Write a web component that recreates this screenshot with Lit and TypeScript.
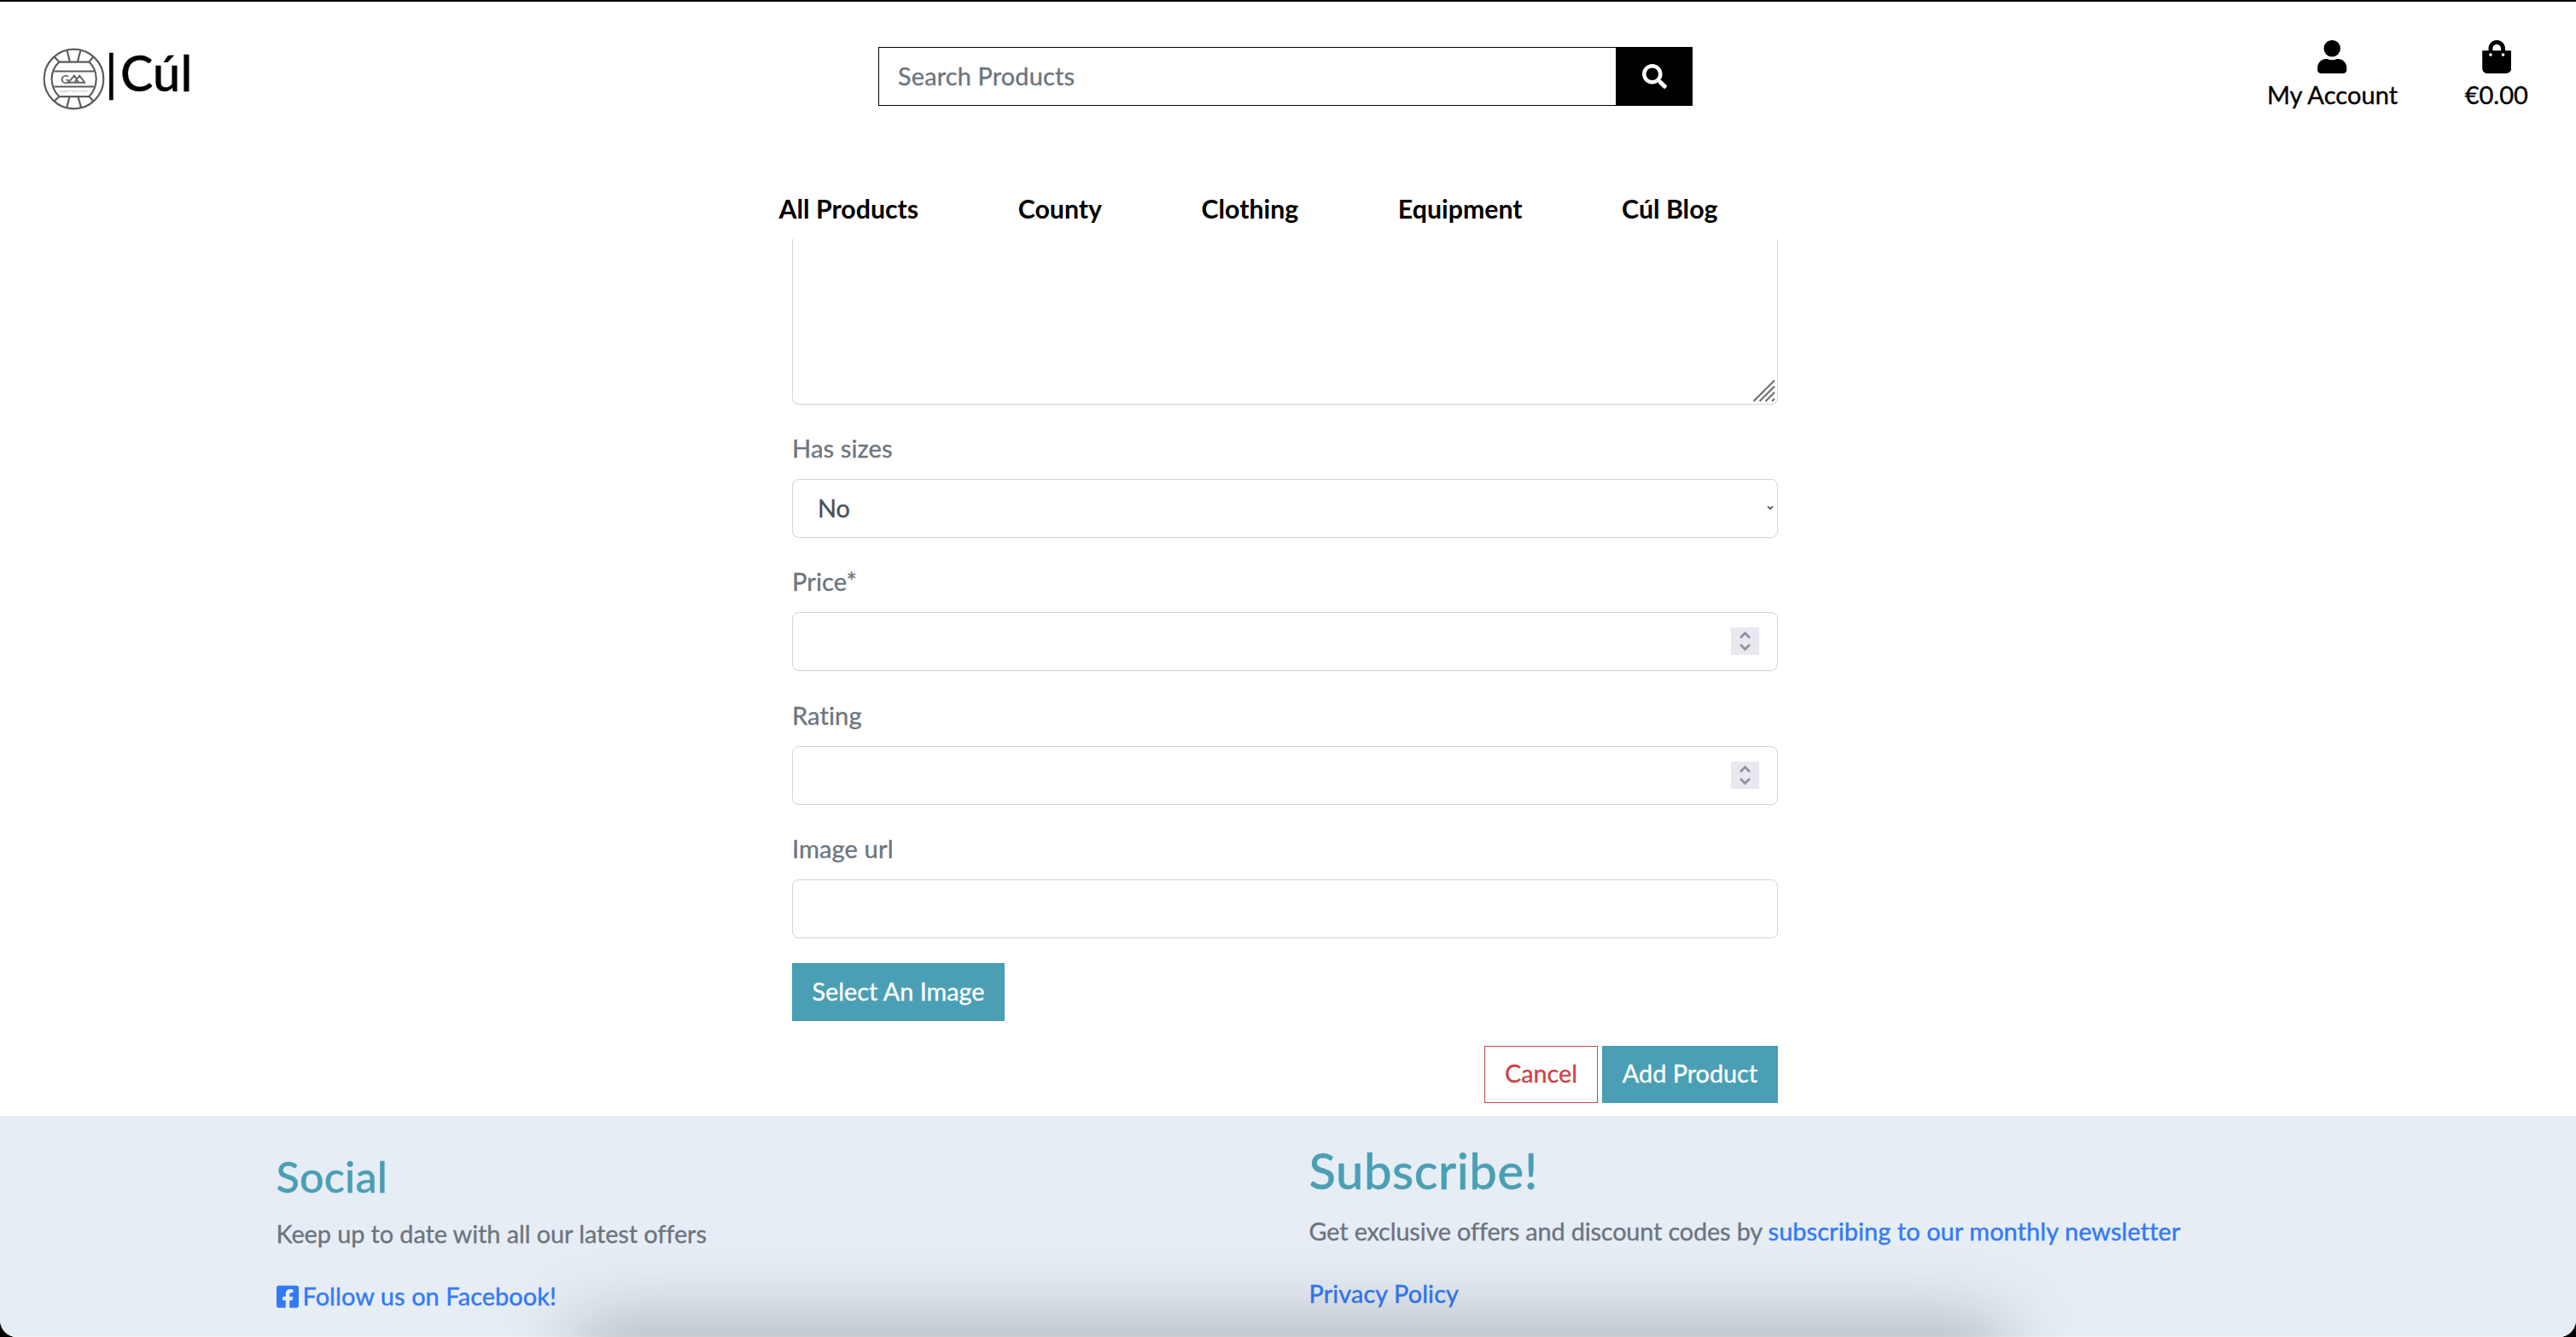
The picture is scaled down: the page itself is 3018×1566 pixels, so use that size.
import { LitElement, html, css, svg } from "lit";
import { customElement } from "lit/decorators.js";

const FA = {
  user: "M224 256A128 128 0 1 0 224 0a128 128 0 1 0 0 256zm89.600 32h-16.700c-22.200 10.200-46.900 16-72.900 16s-50.600-5.800-72.900-16h-16.700C60.200 288 0 348.200 0 422.400V464c0 26.500 21.500 48 48 48h352c26.500 0 48-21.500 48-48v-41.600c0-74.200-60.200-134.400-134.400-134.400z",
  bag: "M352 160v-32C352 57.420 294.579 0 224 0 153.420 0 96 57.420 96 128v32H0v272c0 44.183 35.817 80 80 80h288c44.183 0 80-35.817 80-80V160h-96zm-192-32c0-35.290 28.710-64 64-64s64 28.710 64 64v32H160v-32zm160 120c-13.255 0-24-10.745-24-24s10.745-24 24-24 24 10.745 24 24-10.745 24-24 24zm-192 0c-13.255 0-24-10.745-24-24s10.745-24 24-24 24 10.745 24 24-10.745 24-24 24z",
  search: "M505 442.700L405.300 343c-4.500-4.500-10.600-7-17-7H372c27.600-35.300 44-79.700 44-128C416 93.100 322.900 0 208 0S0 93.100 0 208s93.100 208 208 208c48.300 0 92.700-16.400 128-44v16.300c0 6.400 2.500 12.500 7 17l99.700 99.700c9.400 9.400 24.600 9.400 33.900 0l28.300-28.300c9.400-9.400 9.400-24.600.1-34zM208 336c-70.700 0-128-57.200-128-128 0-70.700 57.200-128 128-128 70.700 0 128 57.200 128 128 0 70.700-57.200 128-128 128z",
  facebook: "M400 32H48A48 48 0 0 0 0 80v352a48 48 0 0 0 48 48h137.250V327.690h-63V256h63v-54.640c0-62.150 37-96.480 93.670-96.480 27.140 0 55.520 4.840 55.520 4.840v61h-31.270c-30.810 0-40.420 19.120-40.420 38.730V256h68.780l-11 71.690h-57.780V480H400a48 48 0 0 0 48-48V80a48 48 0 0 0-48-48z",
};

const icon = (name: keyof typeof FA, width: number) =>
  html`<svg class="icon icon-${name}" viewBox="0 0 ${width} 512" aria-hidden="true">${svg`<path d=${FA[name]}></path>`}</svg>`;

@customElement("crest-logo")
class CrestLogo extends LitElement {
  static styles = css`
    :host { display: block; flex: none; width: 73px; height: 73px; }
    .crest { display: block; width: 100%; height: 100%; }
    .lines { fill: none; stroke: #5c5c5c; stroke-width: 6.500; }
    .mark { fill: none; stroke: #666; stroke-width: 6; stroke-linejoin: round; }
    .g { font: 700 41px Lato, sans-serif; fill: #666; }
    .motto { font: 13px "Liberation Serif", serif; fill: #aaa; }
  `;
  render() {
    return html`<svg class="crest" viewBox="150 166 220 220">
      <g class="lines">
        <circle cx="260" cy="276" r="105"></circle>
        <path d="M208 216H314Q339 240 339 276T314 338H208Q182 312 182 276T208 216Z"></path>
        <path d="M190 249H331M190 303H331"></path>
        <path d="M208 216L190 197M314 216L329 197M208 338L190 356M314 338L330 356"></path>
        <path d="M246 216L236 174M273 216L284 174M245 338L235 378M275 338L286 378"></path>
      </g>
      <text class="g" x="214" y="292">G</text>
      <path class="mark" d="M240 289L262 264L277 289ZM262 289L280 264L299 289Z"></path>
      <text class="motto" x="211" y="323" textLength="98" lengthAdjust="spacingAndGlyphs">Support Your County</text>
    </svg>`;
  }
}

@customElement("app-root")
class AppRoot extends LitElement {
  static styles = css`
    :host {
      display: block; height: 1566px; overflow: hidden; background: #000;
      font: 28.8px/43.2px Lato, sans-serif; color: #000;
      font-variant-ligatures: none; -webkit-text-stroke: 0.350px currentColor;
    }
    * { box-sizing: border-box; }
    .page {
      display: flex; flex-direction: column; width: 3018px; height: 1566px;
      border-top: 2px solid #000; border-radius: 0 0 20px 20px; background: #fff; overflow: hidden;
    }
    .icon { display: block; fill: currentColor; }
    .header { height: 278px; flex: none; }
    .bar { display: flex; height: 220.500px; align-items: flex-start; }
    .brand { display: flex; flex: none; width: 1029px; padding-left: 50px; }
    .brand crest-logo { margin-top: 53.500px; }
    .name { display: flex; gap: 3px; margin-top: 52.700px; font-size: 57.600px; font-weight: 500; line-height: 60px; white-space: nowrap; letter-spacing: 0.300px; }
    .search { display: flex; flex: none; width: 954px; height: 69px; margin-top: 53px; }
    .query {
      flex: 1; min-width: 0; border: 1px solid #000; border-right: 0; border-radius: 0; margin: 0;
      padding: 0 22px; font: inherit; outline: none; background: #fff; letter-spacing: 0.200px;
    }
    .query::placeholder { color: #6c757d; opacity: 1; }
    .go { display: grid; place-items: center; width: 90px; border: 0; padding: 0; background: #000; color: #fff; }
    .icon-search { width: 29px; height: 29px; }
    .tools { display: flex; flex: 1; justify-content: flex-end; gap: 78.500px; padding: 45px 56px 0 0; }
    .tool { display: flex; flex-direction: column; align-items: center; font-size: 29.100px; }
    .tool .icon { width: 34.500px; height: 39px; }
    .tool span { margin-top: 3px; }
    .nav { display: flex; gap: 116.500px; padding-left: 912.500px; font-weight: 700; font-size: 30.300px; -webkit-text-stroke: 0; }
    .form { width: 1155px; flex: none; height: 1027px; margin-left: 928px; }
    .area {
      display: flex; justify-content: flex-end; align-items: flex-end; height: 194px; margin-bottom: 28px;
      border: 1px solid #ced4da; border-top: 0; border-radius: 0 0 8px 8px; padding: 0 2px 2px 0;
    }
    .grip { width: 26px; height: 26px; fill: none; stroke: #6b6b6b; stroke-width: 2; }
    .label { display: block; color: #6c757d; font-size: 29.100px; padding-top: 1px; margin-bottom: 14.700px; letter-spacing: 0.100px; }
    .control {
      display: flex; align-items: center; justify-content: space-between; height: 69px; margin-bottom: 28.500px;
      border: 1px solid #ced4da; border-radius: 8px; padding: 0 21px 0 29px; color: #495057;
    }
    .control.select { padding-right: 4px; }
    .chev { width: 8px; height: 6px; fill: none; stroke: #495057; stroke-width: 1.700; }
    .spin { width: 33px; height: 32px; margin-left: auto; margin-top: -1px; background: #e9e8ee; fill: none; stroke: #9391a0; stroke-width: 2.800; }
    .btn {
      display: inline-flex; align-items: center; justify-content: center; padding: 0; border: 1px solid #4b9fb5;
      background: #4b9fb5; color: #fff; font: inherit; height: 68px; -webkit-text-stroke: 0.350px currentColor;
    }
    .pick { width: 249px; }
    .actions { display: flex; justify-content: flex-end; gap: 5px; margin-top: 29px; }
    .actions .btn { height: 67px; width: 206px; }
    .actions .cancel { width: 133px; border-color: #cb444a; color: #cb444a; background: #fff; }
    .footer { position: relative; flex: 1; display: flex; background: #e6edf5; color: #6c757d; border-bottom: 2px solid #edf2f7; }
    .col { flex: none; width: 1533.500px; padding-left: 323.500px; }
    .col.right { width: auto; padding-left: 0; flex: 1; }
    .title { margin: 0; font-weight: 500; color: #4b9fb5; }
    .social { font-size: 50.400px; line-height: 60px; margin-top: 41px; letter-spacing: 0.150px; }
    .subscribe { font-size: 58px; line-height: 68px; margin-top: 30px; letter-spacing: 0.500px; }
    .text { margin: 0; white-space: nowrap; letter-spacing: -0.050px; }
    .right .text { letter-spacing: -0.130px; }
    .title + .text { margin-top: 16px; }
    .link { color: #347af6; text-decoration: none; letter-spacing: 0.130px; -webkit-text-stroke: 0.450px #347af6; }
    .row { display: flex; align-items: center; gap: 5px; margin-top: 30px; }
    .icon-facebook { width: 26px; height: 29.700px; margin-top: 1px; stroke: none; }
    .shade {
      position: absolute; left: 680px; right: 677px; bottom: -62px; height: 60px; border-radius: 30px;
      box-shadow: 0 0 90px 14px rgba(0, 0, 0, 0.270); pointer-events: none;
    }
  `;

  private spinner() {
    return html`<svg class="spin" viewBox="0 0 33 32"><path d="M11 12L16.500 6.500L22 12M11 20L16.500 25.500L22 20"></path></svg>`;
  }

  render() {
    return html`<div class="page">
      <header class="header">
        <div class="bar">
          <div class="brand"><crest-logo></crest-logo><div class="name"><span>|</span><span>Cúl</span></div></div>
          <div class="search">
            <input class="query" placeholder="Search Products" />
            <button class="go" aria-label="Search">${icon("search", 512)}</button>
          </div>
          <div class="tools">
            <div class="tool">${icon("user", 448)}<span>My Account</span></div>
            <div class="tool">${icon("bag", 448)}<span>€0.00</span></div>
          </div>
        </div>
        <nav class="nav">
          ${["All Products", "County", "Clothing", "Equipment", "Cúl Blog"].map((t) => html`<span>${t}</span>`)}
        </nav>
      </header>
      <main class="form">
        <div class="area">
          <svg class="grip" viewBox="0 0 26 26"><path d="M0.500 25L25 0.500M7.500 25L25 7.500M14.500 25L25 14.500M22 25L25 22"></path></svg>
        </div>
        <span class="label">Has sizes</span>
        <div class="control select"><span>No</span><svg class="chev" viewBox="0 0 8 6"><path d="M1 1L4 4L7 1"></path></svg></div>
        <span class="label">Price*</span>
        <div class="control">${this.spinner()}</div>
        <span class="label">Rating</span>
        <div class="control">${this.spinner()}</div>
        <span class="label">Image url</span>
        <div class="control"></div>
        <button class="btn pick">Select An Image</button>
        <div class="actions"><button class="btn cancel">Cancel</button><button class="btn">Add Product</button></div>
      </main>
      <footer class="footer">
        <div class="col">
          <h3 class="title social">Social</h3>
          <p class="text">Keep up to date with all our latest offers</p>
          <a class="link row">${icon("facebook", 448)}<span>Follow us on Facebook!</span></a>
        </div>
        <div class="col right">
          <h2 class="title subscribe">Subscribe!</h2>
          <p class="text">Get exclusive offers and discount codes by <a class="link">subscribing to our monthly newsletter</a></p>
          <a class="link row">Privacy Policy</a>
        </div>
        <div class="shade"></div>
      </footer>
    </div>`;
  }
}
